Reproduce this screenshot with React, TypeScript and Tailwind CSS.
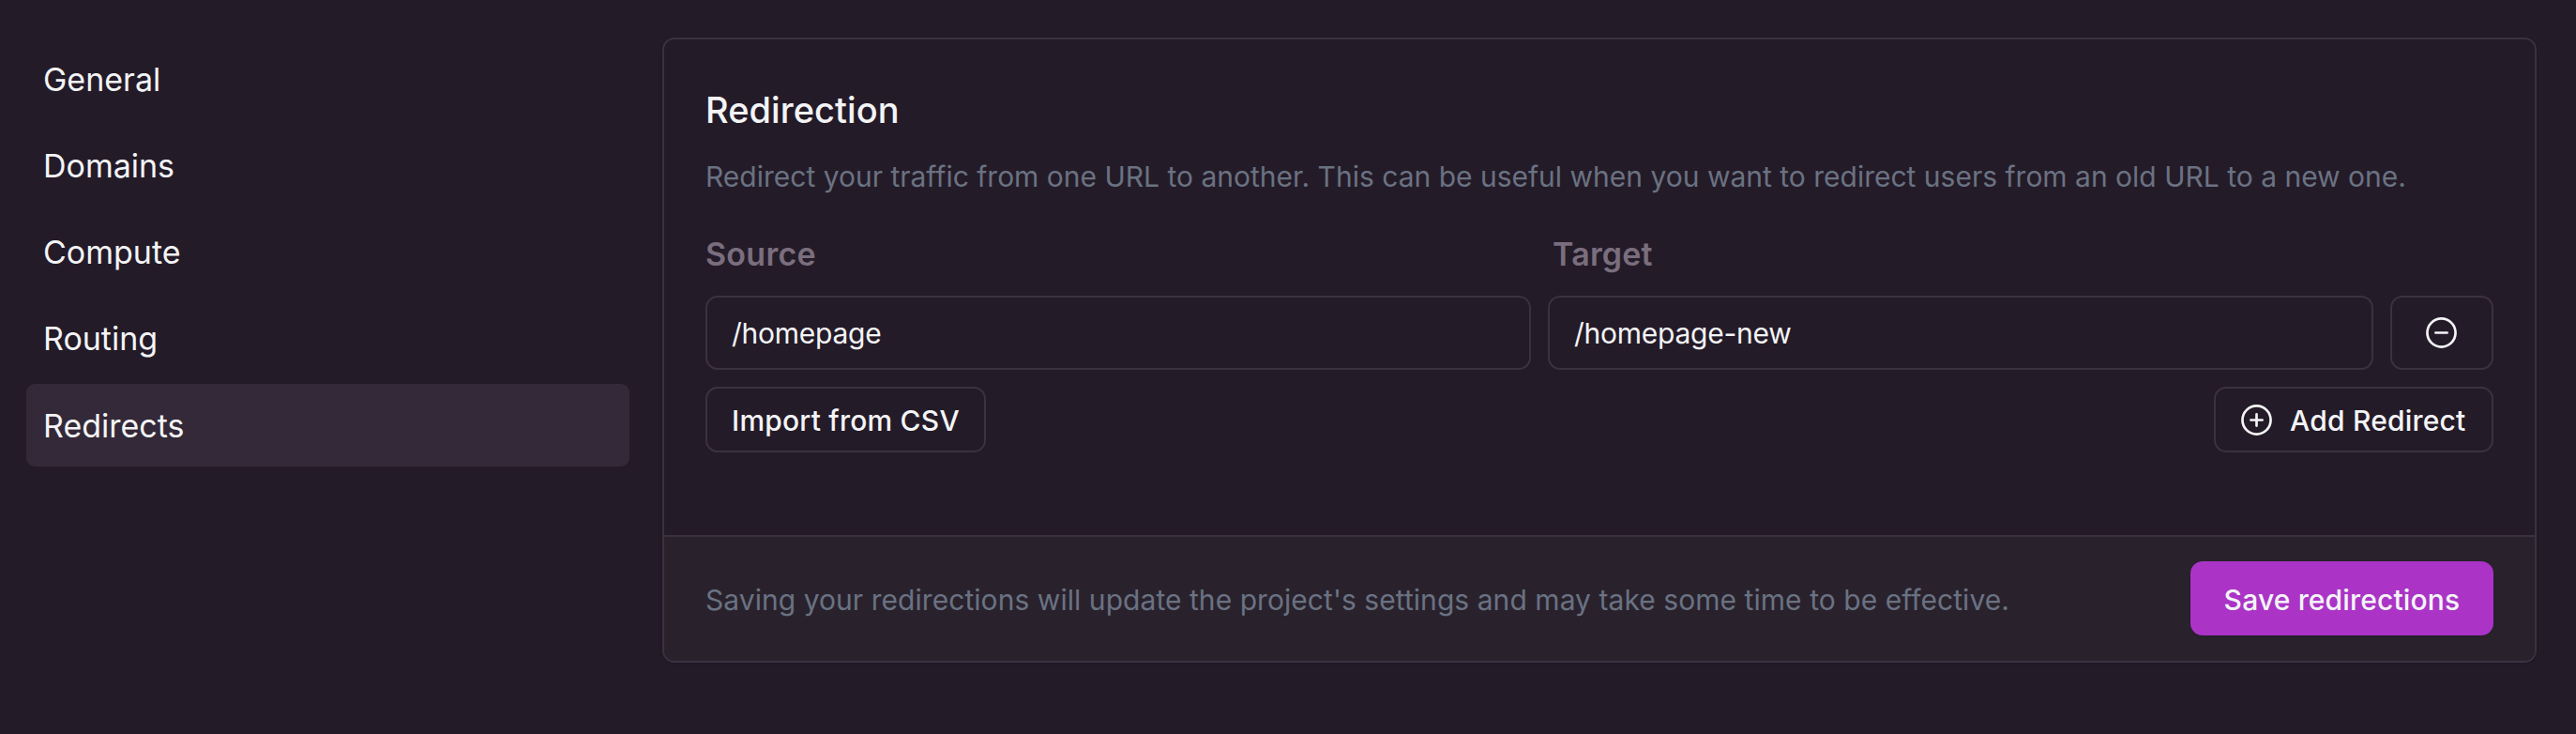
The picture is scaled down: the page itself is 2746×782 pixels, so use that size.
import type { ReactNode } from "react";

const navItems = ["General", "Domains", "Compute", "Routing", "Redirects"];
const activeItem = "Redirects";

function CircleIcon({ children }: { children: ReactNode }) {
  return (
    <svg
      className="size-[33px] shrink-0"
      viewBox="0 0 33 33"
      fill="none"
      stroke="currentColor"
      strokeWidth="2.7"
      strokeLinecap="round"
    >
      <circle cx="16.5" cy="16.5" r="15.05" />
      {children}
    </svg>
  );
}

function Field({ label, value }: { label: string; value: string }) {
  return (
    <input
      aria-label={label}
      defaultValue={value}
      className="h-[79px] w-[880px] rounded-[13px] border-2 border-[#3b3241] bg-transparent px-[26px] text-[30px] tracking-[-0.25px] text-gray-100 outline-none"
    />
  );
}

export default function App() {
  return (
    <div className="flex h-[782px] w-[2746px] items-start gap-[35px] bg-[#241b28] pt-10 pl-7 font-['Inter','Liberation_Sans',sans-serif] text-gray-100">
      <nav className="flex w-[643px] flex-col gap-[4.25px]">
        {navItems.map((item) => (
          <a
            key={item}
            className={
              item === activeItem
                ? "flex h-[88px] items-center rounded-[9px] bg-[#342938] px-[18px] text-[34px]"
                : "flex h-[88px] items-center rounded-[9px] px-[18px] text-[34px]"
            }
          >
            {item}
          </a>
        ))}
      </nav>

      <section className="flex h-[666px] w-[1998px] flex-col overflow-hidden rounded-[13px] border-2 border-[#3b3241] shadow-sm">
        <div className="flex h-[528px] flex-col px-11 pt-14">
          <h2 className="text-[38px] leading-[38px] font-medium tracking-[0.05px]">Redirection</h2>
          <p className="mt-[30px] text-[30px] leading-[44px] whitespace-nowrap text-gray-500">
            Redirect your traffic from one URL to another. This can be useful when you want to redirect users from an
            old URL to a new one.
          </p>
          <div className="mt-[43px] flex text-[34px] leading-[35px] font-semibold text-[#7a6e7e]">
            <div className="w-[903px] tracking-[0.25px]">Source</div>
            <div className="tracking-[0.2px]">Target</div>
          </div>
          <div className="mt-[27px] flex gap-[18px]">
            <Field label="Source" value="/homepage" />
            <Field label="Target" value="/homepage-new" />
            <button
              aria-label="Remove"
              className="flex h-[79px] w-[110px] items-center justify-center rounded-[13px] border-2 border-[#3b3241] pr-px"
            >
              <CircleIcon>
                <path d="M10.4 16.5h12.2" />
              </CircleIcon>
            </button>
          </div>
          <div className="mt-[18px] flex justify-between text-[30px] font-medium">
            <button className="flex h-[70px] w-[299px] items-center rounded-[13px] border-2 border-[#3b3241] px-[26px] pt-[2px] tracking-[0.22px] whitespace-nowrap">
              Import from CSV
            </button>
            <button className="flex h-[70px] w-[298px] items-center gap-[19px] rounded-[13px] border-2 border-[#3b3241] pl-[27px] tracking-[0.2px] whitespace-nowrap">
              <CircleIcon>
                <path d="M10.4 16.5h12.2M16.5 10.4v12.2" />
              </CircleIcon>
              <span className="pt-[2px]">Add Redirect</span>
            </button>
          </div>
        </div>

        <footer className="flex flex-1 items-start justify-between border-t-2 border-[#3b3241] bg-[#29222d] px-11 pt-[26px]">
          <p className="pt-[3px] text-[30px] leading-[76px] tracking-[0.053px] whitespace-nowrap text-gray-500">
            Saving your redirections will update the project's settings and may take some time to be effective.
          </p>
          <button className="flex h-[79px] w-[323px] items-center justify-center rounded-[13px] bg-[#ab34c7] pt-[3px] text-[30px] font-medium tracking-[0.16px] whitespace-nowrap shadow-sm">
            Save redirections
          </button>
        </footer>
      </section>
    </div>
  );
}
